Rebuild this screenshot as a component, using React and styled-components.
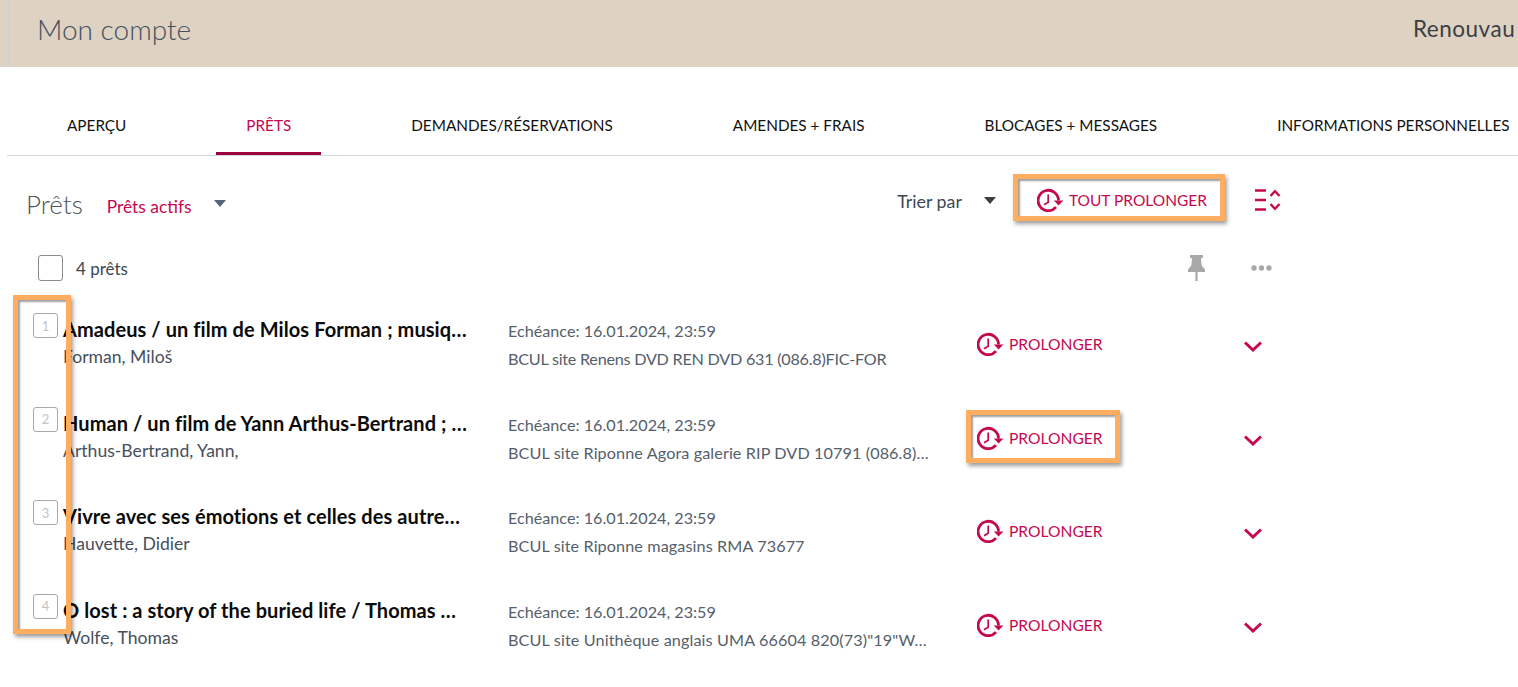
import React from 'react'
import styled, { createGlobalStyle } from 'styled-components'

const crimson = '#c4094f'
const font = 'Lato, "Noto Sans", "Liberation Sans", sans-serif'

const GlobalStyle = createGlobalStyle`
  html, body {
    margin: 0;
    padding: 0;
    background: #fff;
    overflow: hidden;
  }
  body {
    font-family: ${font};
    color: #3d4752;
  }
`

const Page = styled.div`
  width: 1518px;
  height: 687px;
  overflow: hidden;
`

const Header = styled.header`
  height: 67px;
  background: #ded2c2;
  padding-left: 8px;
`

const HeaderInner = styled.div`
  height: 100%;
  box-sizing: border-box;
  border-left: 1px solid #cfd2d2;
  padding: 0 0 10px 28px;
  display: flex;
  align-items: center;
  justify-content: space-between;
  white-space: nowrap;
  overflow: hidden;
`

const PageTitle = styled.h1`
  margin: 0;
  font-size: 28px;
  font-weight: 300;
  color: #44505e;
`

const HeaderLink = styled.span`
  font-size: 22.5px;
  letter-spacing: 0.5px;
  color: #3b3f45;
  width: 105px;
  overflow: hidden;
`

const Tabs = styled.nav`
  margin: 28px 0 0 7px;
  height: 60px;
  border-bottom: 1px solid #d6d6d6;
  display: flex;
  white-space: nowrap;
`

const Tab = styled.a`
  height: 60px;
  box-sizing: border-box;
  padding: 3px 30px 0;
  margin: 0 30px;
  display: flex;
  align-items: center;
  font-size: 15.3px;
  color: ${p => (p.$active ? crimson : '#111')};
  border-bottom: 3px solid ${p => (p.$active ? '#99003d' : 'transparent')};
`

const Toolbar = styled.div`
  margin-top: 19px;
  width: 1281px;
  height: 58px;
  box-sizing: border-box;
  padding-left: 26px;
  display: flex;
  align-items: center;
`

const SectionTitle = styled.h2`
  margin: 0 24px 0 0;
  font-size: 26px;
  font-weight: 300;
  color: #4a5560;
`

const FilterLabel = styled.span`
  font-size: 17.4px;
  color: ${crimson};
  margin-top: 4px;
`

const Caret = styled.span`
  width: 0;
  height: 0;
  border-left: 6.5px solid transparent;
  border-right: 6.5px solid transparent;
  border-top: 7px solid ${p => p.$color};
`

const FilterCaret = styled(Caret)`
  margin-left: 22px;
  margin-top: -2px;
`

const SortGroup = styled.div`
  margin-left: auto;
  display: flex;
  align-items: center;
`

const SortLabel = styled.span`
  font-size: 17.8px;
  color: #3d4752;
  margin-right: 22px;
  margin-top: -6px;
`

const SortCaret = styled(Caret)`
  margin-right: 41px;
  margin-top: -8px;
`

const Action = styled.button`
  position: relative;
  background: none;
  border: 0;
  padding: 0;
  display: flex;
  align-items: center;
  gap: 5px;
  font-family: inherit;
  font-size: 15.6px;
  color: ${crimson};
  white-space: nowrap;
`

const ToolbarAction = styled(Action)`
  margin-top: -9px;
  font-size: 15.5px;
`

const Marker = styled.span`
  position: absolute;
  left: ${p => p.$left}px;
  top: ${p => p.$top}px;
  width: ${p => p.$width}px;
  height: ${p => p.$height}px;
  box-sizing: border-box;
  border: 5px solid #ffad60;
  box-shadow: 2px 3px 4px rgba(0, 0, 0, 0.38), inset 2px 2px 2px rgba(0, 0, 0, 0.38);
  pointer-events: none;
`

const ExpandAll = styled.span`
  display: flex;
  margin-left: 48px;
  margin-top: -9px;
`

const SelectBar = styled.div`
  width: 1281px;
  height: 40px;
  box-sizing: border-box;
  padding-left: 38px;
  display: flex;
  align-items: center;
  margin-top: 15px;
`

const Checkbox = styled.span`
  width: 25px;
  height: 26px;
  box-sizing: border-box;
  border: 1.5px solid #8c8c8c;
  border-radius: 3px;
`

const CountLabel = styled.span`
  margin-left: 13px;
  font-size: 17px;
  color: #3d4752;
`

const BarIcons = styled.div`
  margin-left: auto;
  margin-right: 9px;
  display: flex;
  align-items: center;
  gap: 46px;
`

const List = styled.div`
  position: relative;
  margin-top: 9px;
`

const Row = styled.div`
  height: 93.5px;
  box-sizing: border-box;
  padding: 18px 0 0 33px;
  display: grid;
  grid-template-columns: 25px 450px 469px 267px 20px;
  align-items: start;
`

const NumberBox = styled.span`
  width: 25px;
  height: 25px;
  margin-top: -2px;
  box-sizing: border-box;
  border: 1.5px solid #a9a9a9;
  border-radius: 3px;
  display: flex;
  align-items: center;
  justify-content: center;
  font-size: 13px;
  color: #c4c4c4;
`

const Main = styled.div`
  padding-left: 5px;
  white-space: nowrap;
`

const Title = styled.div`
  font-size: 20px;
  line-height: 30px;
  font-weight: 700;
  letter-spacing: 0.08px;
  color: #0b0b0b;
  margin: -1px 0 1px;
`

const Author = styled.div`
  font-size: 17.6px;
  line-height: 24px;
  color: #46505c;
`

const Details = styled.div`
  white-space: nowrap;
  font-size: 16.2px;
  line-height: 28px;
  color: #55606b;
  padding-top: 2px;
`

const Location = styled.div`
  letter-spacing: ${p => p.$spacing}px;
`

const RowAction = styled.div`
  padding-top: 17px;
`

const Chevron = styled.span`
  display: flex;
  margin-top: 26px;
`

function RenewIcon() {
  return (
    <svg width="27" height="24" viewBox="0 0 27 24" fill="none" stroke={crimson} strokeWidth="2.8">
      <path d="M19 19.2A10.2 10.2 0 1 1 21.5 12.5" />
      <path d="M11.2 6.5V14.2L7 16.8" strokeWidth="1.7" />
      <path d="M16.8 12.4H26.4L21.6 17.4Z" fill={crimson} stroke="none" />
    </svg>
  )
}

function SortIcon() {
  return (
    <svg width="26" height="24" viewBox="0 0 26 24" fill="none" stroke={crimson} strokeWidth="2.4">
      <path d="M0 2.5H11M0 12H11M0 21.5H11" />
      <path d="M15.5 8L20 3.2L24.5 8M15.5 16L20 20.8L24.5 16" />
    </svg>
  )
}

function PinIcon() {
  return (
    <svg width="17" height="26" viewBox="0 0 17 26" fill="#a8a8a8">
      <path d="M2 0H15V2.5L13 3.6L13.6 10.5L17 14.5V17H0V14.5L3.4 10.5L4 3.6L2 2.5Z" />
      <rect x="7.4" y="17" width="2.2" height="9" />
    </svg>
  )
}

function DotsIcon() {
  return (
    <svg width="21" height="6" viewBox="0 0 21 6" fill="#a8a8a8">
      <circle cx="3" cy="3" r="2.7" />
      <circle cx="10.5" cy="3" r="2.7" />
      <circle cx="18" cy="3" r="2.7" />
    </svg>
  )
}

function ChevronIcon() {
  return (
    <svg width="18" height="11" viewBox="0 0 18 11" fill="none" stroke={crimson} strokeWidth="3">
      <path d="M1 1.5L9 9L17 1.5" />
    </svg>
  )
}

const loans = [
  {
    title: 'Amadeus / un film de Milos Forman ; musiq…',
    author: 'Forman, Miloš',
    location: 'BCUL site Renens DVD REN DVD 631 (086.8)FIC-FOR',
    spacing: -0.25,
  },
  {
    title: 'Human / un film de Yann Arthus-Bertrand ; …',
    author: 'Arthus-Bertrand, Yann,',
    location: 'BCUL site Riponne Agora galerie RIP DVD 10791 (086.8)…',
    spacing: 0.1,
    marked: true,
  },
  {
    title: 'Vivre avec ses émotions et celles des autre…',
    author: 'Hauvette, Didier',
    location: 'BCUL site Riponne magasins RMA 73677',
    spacing: 0.1,
  },
  {
    title: 'O lost : a story of the buried life / Thomas …',
    author: 'Wolfe, Thomas',
    location: 'BCUL site Unithèque anglais UMA 66604 820(73)"19"W…',
    spacing: 0.12,
  },
]

const tabs = ['APERÇU', 'PRÊTS', 'DEMANDES/RÉSERVATIONS', 'AMENDES + FRAIS', 'BLOCAGES + MESSAGES', 'INFORMATIONS PERSONNELLES']

export default function App() {
  return (
    <Page>
      <GlobalStyle />
      <Header>
        <HeaderInner>
          <PageTitle>Mon compte</PageTitle>
          <HeaderLink>Renouvau</HeaderLink>
        </HeaderInner>
      </Header>

      <Tabs>
        {tabs.map(t => (
          <Tab key={t} $active={t === 'PRÊTS'}>{t}</Tab>
        ))}
      </Tabs>

      <Toolbar>
        <SectionTitle>Prêts</SectionTitle>
        <FilterLabel>Prêts actifs</FilterLabel>
        <FilterCaret $color="#52667a" />
        <SortGroup>
          <SortLabel>Trier par</SortLabel>
          <SortCaret $color="#3d3d3d" />
          <ToolbarAction>
            <RenewIcon />
            TOUT PROLONGER
            <Marker $left={-24} $top={-14} $width={212} $height={47} />
          </ToolbarAction>
          <ExpandAll><SortIcon /></ExpandAll>
        </SortGroup>
      </Toolbar>

      <SelectBar>
        <Checkbox />
        <CountLabel>4 prêts</CountLabel>
        <BarIcons>
          <PinIcon />
          <DotsIcon />
        </BarIcons>
      </SelectBar>

      <List>
        {loans.map((loan, i) => (
          <Row key={loan.title}>
            <NumberBox>{i + 1}</NumberBox>
            <Main>
              <Title>{loan.title}</Title>
              <Author>{loan.author}</Author>
            </Main>
            <Details>
              <div>Echéance: 16.01.2024, 23:59</div>
              <Location $spacing={loan.spacing}>{loan.location}</Location>
            </Details>
            <RowAction>
              <Action>
                <RenewIcon />
                PROLONGER
                {loan.marked && <Marker $left={-11} $top={-16} $width={154} $height={53} />}
              </Action>
            </RowAction>
            <Chevron><ChevronIcon /></Chevron>
          </Row>
        ))}
        <Marker $left={13} $top={-2} $width={58} $height={339} />
      </List>
    </Page>
  )
}
